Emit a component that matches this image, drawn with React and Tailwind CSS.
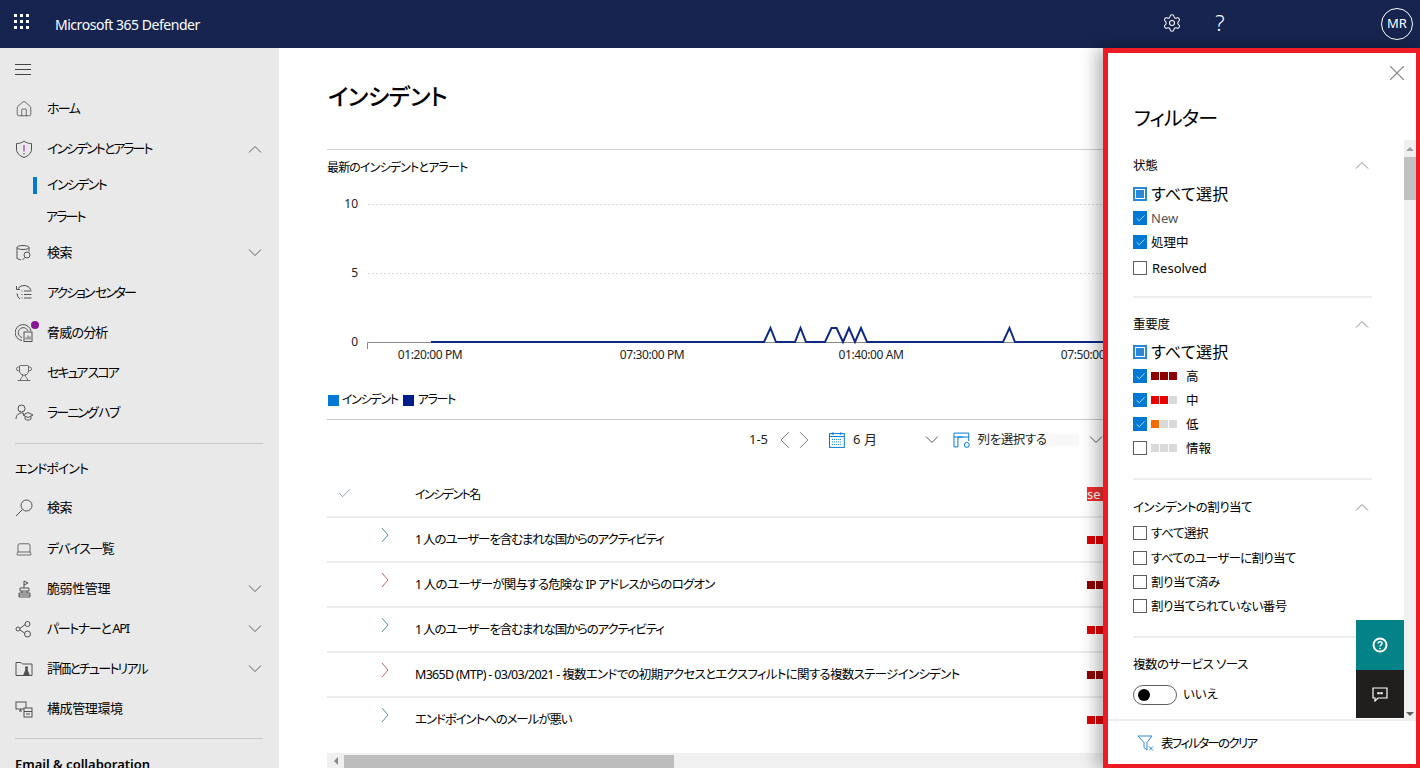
import { Home, Trophy, Laptop, Settings, Check, X } from 'lucide-react';

const Chev = ({ up, className = 'text-[#605e5c]' }) => (
  <svg width="14" height="8" viewBox="0 0 14 8" fill="none" stroke="currentColor" strokeWidth="1" className={className}>
    <polyline points={up ? '1,7.5 7,1.5 13,7.5' : '1,0.5 7,6.5 13,0.5'} />
  </svg>
);

const Ico = ({ children }) => (
  <svg width="18" height="18" viewBox="0 0 18 18" fill="none" stroke="#505050" strokeWidth="1">
    {children}
  </svg>
);

const ShieldIcon = () => (
  <Ico>
    <path d="M9 1C7 2.8 4.5 3.500 1.500 3.500V9c0 4 3 6.800 7.500 8.500 4.500-1.700 7.500-4.500 7.500-8.500V3.500C13.500 3.500 11 2.800 9 1z" />
    <path d="M9 5v6.500M9 13v1.500" stroke="#881798" />
  </Ico>
);
const SearchIcon = () => (
  <Ico>
    <circle cx="11.5" cy="6.5" r="5.5" />
    <path d="M7.500 10.500L1 17" />
  </Ico>
);
const DbSearchIcon = () => (
  <Ico>
    <ellipse cx="8" cy="3.5" rx="6" ry="2" />
    <path d="M2 3.5v11l4 1.5M14 3.5v4" />
    <circle cx="12" cy="11" r="3" />
    <path d="M10 13.5L7.5 16" />
  </Ico>
);
const ActionIcon = () => (
  <Ico>
    <path d="M3 4.5A7.5 7.5 0 0 1 16 6M2 9.5a7 7 0 0 0 3 5.5M1.5 2v3.5H5M9 16.5" />
    <path d="M9 7h7.5M9 10.5h7.5M9 14h7.5M6.5 7h1M6.5 10.5h1M6.5 14h1" />
  </Ico>
);
const RadarIcon = () => (
  <Ico>
    <path d="M7 16.5A8 8 0 1 1 16 7" />
    <path d="M7 13.5A5 5 0 1 1 13 7" />
    <rect x="9" y="8" width="8" height="9.5" fill="#e9e9e9" />
    <path d="M11 15.5v-2M13 15.5v-4M15 15.5v-3" />
  </Ico>
);
const LearnIcon = () => (
  <Ico>
    <circle cx="6.5" cy="4.5" r="3.5" />
    <path d="M1 15c0-3 2-6 5.5-6 1 0 2 .3 2.5.7" />
    <path d="M8 11l5-2.5 5 2.5-5 2.5z" />
    <path d="M10 12.5V15c1.5 1.5 4.5 1.5 6 0v-2.5" />
  </Ico>
);
const FlagIcon = () => (
  <Ico>
    <path d="M9 8V1l4 2-4 2" />
    <path d="M5 8h9v3H5zM7 11v2M12 11v2M4 13h11v4H4zM4 15h11" />
  </Ico>
);
const PartnerIcon = () => (
  <Ico>
    <circle cx="3" cy="9" r="2" />
    <circle cx="12.5" cy="4" r="2.5" />
    <circle cx="12.5" cy="14" r="3" />
    <path d="M10 4.5L5 8.5M9.5 13L5 10" />
  </Ico>
);
const EvalIcon = () => (
  <Ico>
    <path d="M1 15.5V2.5h5l1.5 1.500h9.500v11.500H1z" />
    <path d="M10 7h3M10.800 7v3l-2.300 5.500h6L12.200 10V7" fill="#505050" />
  </Ico>
);
const ConfigIcon = () => (
  <Ico>
    <rect x="1" y="2" width="10" height="7" />
    <path d="M4 11h3M5.500 9v2" />
    <rect x="9" y="8" width="8" height="9" fill="#e9e9e9" />
    <path d="M9 11.500h8M11 14h4" />
  </Ico>
);

const NavRow = ({ icon, label, chev, dot, track = 'tracking-[-0.4px]', cls = '' }) => (
  <div className={`flex items-center h-10 pl-[15px] pr-[17px] text-[13px] text-black ${cls}`}>
    <span className="relative w-[32px] shrink-0 flex">
      {icon}
      {dot && <span className="absolute left-[16px] -top-[3px] w-2 h-2 rounded-full bg-[#881798]" />}
    </span>
    <span className={`flex-1 whitespace-nowrap ${track}`}>{label}</span>
    {chev === 'up' && <Chev up />}
    {chev === 'down' && <Chev />}
  </div>
);

const Sidebar = () => (
  <aside className="w-[279px] shrink-0 bg-[#e9e9e9] overflow-hidden pt-px">
    <div className="h-10 flex items-center pl-[15px]">
      <div className="w-4 flex flex-col gap-1">
        <span className="h-px bg-[#444]" />
        <span className="h-px bg-[#444]" />
        <span className="h-px bg-[#444]" />
      </div>
    </div>
    <NavRow icon={<Home size={18} strokeWidth={1} color="#444" />} label="ホーム" track="tracking-[-1.7px]" />
    <NavRow icon={<ShieldIcon />} label="インシデントとアラート" chev="up" track="tracking-[-2px]" />
    <div className="relative h-8 flex items-center pl-[47px] text-[13px] tracking-[-1.6px]">
      <span className="absolute left-[33px] top-[8px] w-[4px] h-[17px] bg-[#0078d4]" />
      インシデント
    </div>
    <div className="h-8 flex items-center pl-[46px] text-[13px] tracking-[-1.9px]">アラート</div>
    <NavRow icon={<DbSearchIcon />} label="検索" chev="down" />
    <NavRow icon={<ActionIcon />} label="アクション センター" track="tracking-[-2px]" />
    <NavRow icon={<RadarIcon />} label="脅威の分析" dot track="tracking-[-0.8px]" />
    <NavRow icon={<Trophy size={18} strokeWidth={1} color="#444" />} label="セキュア スコア" track="tracking-[-2px]" />
    <NavRow icon={<LearnIcon />} label="ラーニング ハブ" track="tracking-[-1.9px]" />
    <div className="mt-[10px] mx-[15px] w-[248px] h-px bg-[#c8c8c8]" />
    <div className="h-[44px] pl-[15px] pt-[6px] flex items-center text-[13px] tracking-[-1px]">エンドポイント</div>
    <NavRow icon={<SearchIcon />} label="検索" />
    <NavRow icon={<Laptop size={18} strokeWidth={1} color="#444" />} label="デバイス一覧" track="tracking-[-1.1px]" cls="mt-px" />
    <NavRow icon={<FlagIcon />} label="脆弱性管理" chev="down" />
    <NavRow icon={<PartnerIcon />} label="パートナーと API" chev="down" track="tracking-[-1.4px]" />
    <NavRow icon={<EvalIcon />} label="評価とチュートリアル" chev="down" track="tracking-[-1.8px]" />
    <NavRow icon={<ConfigIcon />} label="構成管理環境" />
    <div className="mt-[9px] mx-[15px] w-[248px] h-px bg-[#c8c8c8]" />
    <div className="pl-[15px] mt-[16px] text-[13px] font-semibold whitespace-nowrap">Email &amp; collaboration</div>
  </aside>
);

const peaks = 'M431 342H764L770.5 328L776 342H795L800.5 328L806 342H825L831.5 328H836.5L843 342L849 328L855 342L861 328L867 342H1003L1009.5 328L1015 342H1110';

const Chart = () => (
  <svg width="776" height="190" viewBox="327 190 776 190" className="block mt-[4px]">
    <g stroke="#d8d8d8" strokeDasharray="2 2">
      <line x1="368" x2="1103" y1="204.5" y2="204.5" />
      <line x1="368" x2="1103" y1="273.5" y2="273.5" />
    </g>
    <path d="M367.5 349V342.5H1103" fill="none" stroke="#8a8a8a" />
    <path d={peaks} fill="none" stroke="#0f2a85" strokeWidth="2" />
    <g fontSize="12" fill="#222" textAnchor="end">
      <text x="358" y="208">10</text>
      <text x="358" y="277">5</text>
      <text x="358" y="346">0</text>
    </g>
    <g fontSize="12" fill="#222" textAnchor="middle" letterSpacing="-0.4">
      <text x="430" y="359">01:20:00 PM</text>
      <text x="652" y="359">07:30:00 PM</text>
      <text x="871" y="359">01:40:00 AM</text>
      <text x="1093" y="359">07:50:00 PM</text>
    </g>
  </svg>
);

const rows = [
  { name: '1 人のユーザーを含むまれな国からのアクティビティ', color: 'bg-[#e00000]', chev: 'text-[#5a8ba6]', track: 'tracking-[-1.15px]' },
  { name: '1 人のユーザーが関与する危険な IP アドレスからのログオン', color: 'bg-[#8f0000]', chev: 'text-[#b8685c]', track: 'tracking-[-0.78px]' },
  { name: '1 人のユーザーを含むまれな国からのアクティビティ', color: 'bg-[#e00000]', chev: 'text-[#5a8ba6]', track: 'tracking-[-1.15px]' },
  { name: 'M365D (MTP) - 03/03/2021 - 複数エンドでの初期アクセスとエクスフィルトに関する複数ステージインシデント', color: 'bg-[#8f0000]', chev: 'text-[#b8685c]', track: 'tracking-[-0.7px]' },
  { name: 'エンドポイントへのメールが悪い', color: 'bg-[#e00000]', chev: 'text-[#5a8ba6]', track: 'tracking-[-1.1px]' },
];

const Main = () => (
  <main className="flex-1 min-w-0 bg-white overflow-hidden flex flex-col">
    <div className="flex-1 min-h-0 pl-12">
      <h1 className="h-[101px] flex items-center text-[23px] font-medium pb-[4px] pl-px tracking-[-0.4px] whitespace-nowrap">インシデント</h1>
      <div className="h-px bg-[#d0d0d0]" />
      <div className="h-[36px] flex items-center text-[12px] tracking-[-0.85px]">最新のインシデントとアラート</div>
      <Chart />
      <div className="h-[30px] mt-[5px] mb-[4px] flex items-center pl-px text-[12px] tracking-[-1.3px]">
        <span className="w-[11px] h-[11px] bg-[#0078d4] mr-[3px]" />
        <span>インシデント</span>
        <span className="w-[11px] h-[11px] bg-[#001d8c] ml-[5px] mr-[4px]" />
        <span>アラート</span>
      </div>
      <div className="h-px bg-[#c8c8c8]" />
      <div className="h-[40px] flex items-center text-[13px] text-[#222] whitespace-nowrap">
        <span className="ml-[422px] w-[26px]">1-5</span>
        <svg width="10" height="18" viewBox="0 0 10 18" fill="none" stroke="#777" className="ml-[5px]">
          <polyline points="9,1 1,9 9,17" />
        </svg>
        <svg width="10" height="18" viewBox="0 0 10 18" fill="none" stroke="#777" className="ml-[10px]">
          <polyline points="1,1 9,9 1,17" />
        </svg>
        <svg width="16" height="16" viewBox="0 0 16 16" fill="none" stroke="#0078d4" className="ml-[20px]">
          <rect x="0.5" y="1.5" width="15" height="14" />
          <path d="M0.5 4.5h15" />
          <path d="M4 0v3M12 0v3" />
          <path d="M3 7.5h10M3 10h10M3 12.5h10" strokeDasharray="1 1" />
        </svg>
        <span className="ml-[8px] w-[73px]">6 月</span>
        <Chev className="text-[#555]" />
        <svg width="18" height="18" viewBox="0 0 18 18" fill="none" stroke="#0078d4" strokeWidth="1" className="ml-[14px]">
          <path d="M1 2h15v4H1zM1 6v10h4V6M5 6h5M16 6v4" />
          <circle cx="14" cy="14" r="2.5" />
        </svg>
        <span className="ml-[7px] tracking-[-0.4px] text-[12.5px] w-[68px]">列を選択する</span>
        <span className="w-[34px] h-[12px] bg-[#f8f8f8]" />
        <Chev className="text-[#555] ml-[10px] shrink-0" />
      </div>
      <div className="mt-[11px]">
        <div className="h-[47px] flex items-center border-b-2 border-[#ececec] text-[12px] whitespace-nowrap tracking-[-1.55px]">
          <span className="w-[88px] pl-[10px] shrink-0">
            <Check size={15} strokeWidth={1} color="#3f6f98" />
          </span>
          <span className="flex-1 pt-[2px]">インシデント名</span>
          <span className="bg-[#f03030] text-white text-[13px] leading-[14px] tracking-normal w-[16px] overflow-hidden">se</span>
        </div>
        {rows.map((r, i) => (
          <div key={i} className={`h-[45px] flex items-center border-b-2 border-[#ececec] last:border-transparent text-[12.5px] whitespace-nowrap ${r.track}`}>
            <span className="w-[88px] flex justify-end pr-[26px] pb-[10px] shrink-0">
              <svg width="8" height="16" viewBox="0 0 8 16" fill="none" stroke="currentColor" className={r.chev}>
                <polyline points="1,1 7,8 1,15" />
              </svg>
            </span>
            <span className="flex-1 pt-[2px]">{r.name}</span>
            <span className="flex gap-[1px] w-[16px] overflow-hidden">
              <span className={`w-[8px] h-[8px] shrink-0 ${r.color}`} />
              <span className={`w-[8px] h-[8px] shrink-0 ${r.color}`} />
            </span>
          </div>
        ))}
      </div>
    </div>
    <div className="h-[15px] ml-12 bg-[#f0f0f0] flex items-end shrink-0">
      <span className="w-[17px] h-full flex items-center justify-center">
        <span className="border-y-[4px] border-y-transparent border-r-[4px] border-r-[#888]" />
      </span>
      <span className="w-[330px] h-[13px] bg-[#bdbdbd]" />
    </div>
  </main>
);

const Box = ({ state }) => {
  if (state === 'all') {
    return (
      <span className="w-[14px] h-[14px] border-2 border-[#2b88d8] flex items-center justify-center shrink-0">
        <span className="w-[8px] h-[8px] bg-[#2b88d8]" />
      </span>
    );
  }
  if (state === 'on') {
    return (
      <span className="w-[14px] h-[14px] bg-[#0078d4] flex items-center justify-center shrink-0">
        <Check size={11} strokeWidth={1.5} color="#fff" />
      </span>
    );
  }
  return <span className="w-[14px] h-[14px] border border-[#605e5c] shrink-0" />;
};

const Opt = ({ state, children, big, cls = '' }) => (
  <div className={`h-6 flex items-center gap-[4px] whitespace-nowrap text-black ${big ? 'text-[16px] tracking-[0.4px]' : 'text-[12.5px]'} ${cls}`}>
    <Box state={state} />
    {children}
  </div>
);

const SecTitle = ({ children, cls = '', track = 'tracking-[-0.3px]' }) => (
  <div className={`h-6 w-[239px] flex items-center justify-between pr-[3px] text-[12.5px] whitespace-nowrap ${track} ${cls}`}>
    <span className="pt-[2px]">{children}</span>
    <Chev up className="text-[#8a8a8a]" />
  </div>
);

const Sev = ({ state, colors, label }) => (
  <Opt state={state}>
    <span className="flex gap-px">
      {colors.map((c, i) => <span key={i} className={`w-[8px] h-[8px] ${c}`} />)}
    </span>
    <span className="ml-[5px] pt-[2px]">{label}</span>
  </Opt>
);

const Rule = ({ cls }) => <div className={`h-[2px] bg-[#eeeeee] w-[239px] ${cls}`} />;

const FilterPanel = () => (
  <aside className="relative w-[317px] shrink-0 bg-white border-[#ed1c24] border-l-[5px] border-t-[5px] border-r-[4px] border-b-[4px] flex flex-col shadow-[-6px_0_16px_rgba(0,0,0,0.3)] overflow-hidden">
    <div className="h-[87px] shrink-0 pl-[26px] relative">
      <X size={26} strokeWidth={1} color="#8a8a8a" className="absolute right-[6px] top-[7px]" />
      <div className="pt-[52px] text-[20px] leading-[28px] tracking-[-0.9px]">フィルター</div>
    </div>
    <div className="flex-1 min-h-0 flex">
      <div className="flex-1 min-w-0 pl-[25px] pt-[13px] overflow-hidden">
        <SecTitle>状態</SecTitle>
        <Opt state="all" big cls="mt-[5px]">すべて選択</Opt>
        <Opt state="on"><span className="text-[#555] text-[13px] pt-[2px]">New</span></Opt>
        <Opt state="on"><span className="pt-[2px]">処理中</span></Opt>
        <Opt state="off" cls="mt-[2px]"><span className="pt-[2px] ml-px text-[13px]">Resolved</span></Opt>
        <Rule cls="mt-[16px]" />
        <SecTitle cls="mt-[14px]">重要度</SecTitle>
        <Opt state="all" big cls="mt-[4px]">すべて選択</Opt>
        <Sev state="on" colors={['bg-[#8f0000]', 'bg-[#8f0000]', 'bg-[#8f0000]']} label="高" />
        <Sev state="on" colors={['bg-[#e60000]', 'bg-[#e60000]', 'bg-[#dadada]']} label="中" />
        <Sev state="on" colors={['bg-[#f56b00]', 'bg-[#dadada]', 'bg-[#dadada]']} label="低" />
        <Sev state="off" colors={['bg-[#dadada]', 'bg-[#dadada]', 'bg-[#dadada]']} label="情報" />
        <Rule cls="mt-[18px]" />
        <SecTitle cls="mt-[15px]" track="tracking-[-0.55px]">インシデントの割り当て</SecTitle>
        <Opt state="off" cls="mt-[2px]"><span className="tracking-[-0.4px] pt-[2px]">すべて選択</span></Opt>
        <Opt state="off" cls="mt-px"><span className="tracking-[-0.7px] pt-[2px]">すべてのユーザーに割り当て</span></Opt>
        <Opt state="off"><span className="tracking-[-0.45px] pt-[2px]">割り当て済み</span></Opt>
        <Opt state="off"><span className="tracking-[-0.55px] pt-[2px]">割り当てられていない番号</span></Opt>
        <Rule cls="mt-[18px]" />
        <SecTitle cls="mt-[14px]" track="tracking-[-0.5px]">複数のサービス ソース</SecTitle>
        <div className="mt-[9px] flex items-center gap-[6px] text-[12.5px]">
          <span className="w-[44px] h-[20px] rounded-full border border-[#605e5c] flex items-center pl-[4px]">
            <span className="w-[12px] h-[12px] rounded-full bg-black" />
          </span>
          いいえ
        </div>
      </div>
      <div className="w-[12px] shrink-0 bg-[#f0f0f0] flex flex-col items-center">
        <span className="mt-[7px] border-x-[4px] border-x-transparent border-b-[4px] border-b-[#a0a0a0]" />
        <span className="mt-[6px] w-full h-[43px] bg-[#c1c1c1]" />
        <span className="mt-auto mb-[3px] border-x-[4px] border-x-transparent border-t-[4px] border-t-[#606060]" />
      </div>
    </div>
    <div className="h-[45px] shrink-0 border-t-2 border-[#eeeeee] flex items-center pl-[29px] gap-[6px] text-[12.5px] tracking-[-1.7px]">
      <svg width="18" height="18" viewBox="0 0 18 18" fill="none" stroke="#2b88d8" strokeWidth="1">
        <path d="M1 2h14L10 8.5V16l-3-2.5v-5z" />
        <path d="M12 12.5l4 4M16 12.5l-4 4" />
      </svg>
      <span className="pt-[3px]">表フィルターのクリア</span>
    </div>
    <div className="absolute right-[12px] top-[567px] w-[48px] flex flex-col">
      <div className="h-[50px] bg-[#038387] flex items-center justify-center">
        <svg width="16" height="16" viewBox="0 0 16 16" fill="none" stroke="#fff" strokeWidth="2">
          <circle cx="8" cy="8" r="6.5" />
          <path d="M6 6.5C6 4 10 4 10 6.5 10 8 8 8 8 9.5" strokeWidth="1.5" />
          <circle cx="8" cy="11.5" r="0.5" strokeWidth="1" />
        </svg>
      </div>
      <div className="h-[48px] bg-[#201f1e] flex items-center justify-center">
        <svg width="16" height="16" viewBox="0 0 16 16" fill="none" stroke="#fff" strokeWidth="1.2">
          <path d="M1 2h14v10H6l-3 3v-3H1z" />
          <path d="M5.5 6.5h2v1.5h-2zM8.5 6.5h2v1.5h-2z" fill="#fff" strokeWidth="0.5" />
        </svg>
      </div>
    </div>
  </aside>
);

const App = () => (
  <div
    className="w-[1420px] h-[768px] overflow-hidden flex flex-col text-black [font-feature-settings:'palt']"
    style={{ fontFamily: '"Noto Sans", "Noto Sans CJK JP", sans-serif' }}
  >
    <header className="h-12 shrink-0 bg-[#16244f] flex items-center text-white">
      <div className="ml-[14px] mb-[5px] grid grid-cols-3 gap-[3px]">
        {Array.from({ length: 9 }).map((_, i) => (
          <span key={i} className="w-[3px] h-[3px] bg-white" />
        ))}
      </div>
      <span className="ml-[26px] text-[14px] tracking-[-0.47px]">Microsoft 365 Defender</span>
      <Settings size={20} strokeWidth={1.25} className="ml-auto mb-[3px]" />
      <span className="ml-[31px] mb-[4px] w-[14px] text-center text-[22px] font-light">?</span>
      <span className="ml-[154px] mr-[7px] w-[32px] h-[32px] rounded-full border border-white flex items-center justify-center text-[13px]">MR</span>
    </header>
    <div className="flex-1 min-h-0 flex">
      <Sidebar />
      <Main />
      <FilterPanel />
    </div>
  </div>
);

export default App;
